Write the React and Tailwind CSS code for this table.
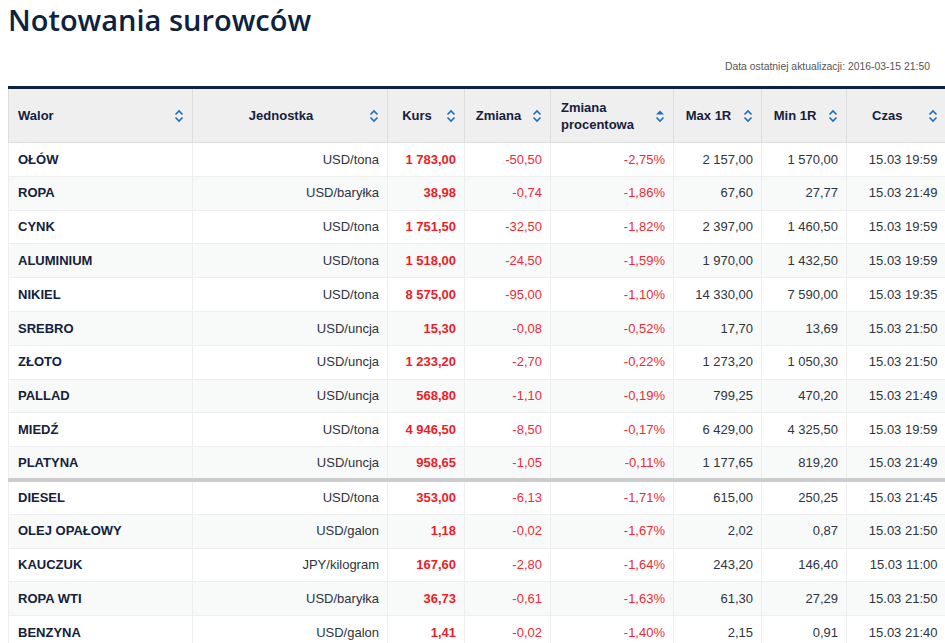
import React from "react";

const columns = [
    { key: "name", label: "Walor", width: "w-[184px]", align: "justify-between", textAlign: "text-left" },
    { key: "unit", label: "Jednostka", width: "w-[195px]", align: "justify-center", textAlign: "text-center" },
    { key: "kurs", label: "Kurs", width: "w-[77px]", align: "justify-center", textAlign: "text-center" },
    { key: "change", label: "Zmiana", width: "w-[86px]", align: "justify-center", textAlign: "text-center" },
    { key: "pct", label: "Zmiana procentowa", width: "w-[123px]", align: "justify-between", textAlign: "text-left", active: true },
    { key: "max", label: "Max 1R", width: "w-[88px]", align: "justify-center", textAlign: "text-center" },
    { key: "min", label: "Min 1R", width: "w-[85px]", align: "justify-center", textAlign: "text-center" },
    { key: "time", label: "Czas", width: "w-[99px]", align: "justify-center", textAlign: "text-center" },
];

const metals = [
    ["OŁÓW", "USD/tona", "1 783,00", "-50,50", "-2,75%", "2 157,00", "1 570,00", "15.03 19:59"],
    ["ROPA", "USD/baryłka", "38,98", "-0,74", "-1,86%", "67,60", "27,77", "15.03 21:49"],
    ["CYNK", "USD/tona", "1 751,50", "-32,50", "-1,82%", "2 397,00", "1 460,50", "15.03 19:59"],
    ["ALUMINIUM", "USD/tona", "1 518,00", "-24,50", "-1,59%", "1 970,00", "1 432,50", "15.03 19:59"],
    ["NIKIEL", "USD/tona", "8 575,00", "-95,00", "-1,10%", "14 330,00", "7 590,00", "15.03 19:35"],
    ["SREBRO", "USD/uncja", "15,30", "-0,08", "-0,52%", "17,70", "13,69", "15.03 21:50"],
    ["ZŁOTO", "USD/uncja", "1 233,20", "-2,70", "-0,22%", "1 273,20", "1 050,30", "15.03 21:50"],
    ["PALLAD", "USD/uncja", "568,80", "-1,10", "-0,19%", "799,25", "470,20", "15.03 21:49"],
    ["MIEDŹ", "USD/tona", "4 946,50", "-8,50", "-0,17%", "6 429,00", "4 325,50", "15.03 19:59"],
    ["PLATYNA", "USD/uncja", "958,65", "-1,05", "-0,11%", "1 177,65", "819,20", "15.03 21:49"],
];

const fuels = [
    ["DIESEL", "USD/tona", "353,00", "-6,13", "-1,71%", "615,00", "250,25", "15.03 21:45"],
    ["OLEJ OPAŁOWY", "USD/galon", "1,18", "-0,02", "-1,67%", "2,02", "0,87", "15.03 21:50"],
    ["KAUCZUK", "JPY/kilogram", "167,60", "-2,80", "-1,64%", "243,20", "146,40", "15.03 11:00"],
    ["ROPA WTI", "USD/baryłka", "36,73", "-0,61", "-1,63%", "61,30", "27,29", "15.03 21:50"],
    ["BENZYNA", "USD/galon", "1,41", "-0,02", "-1,40%", "2,15", "0,91", "15.03 21:40"],
];

const SortIcon = ({ active }) => (
    <svg width="10" height="14" viewBox="0 0 10 14" className="shrink-0">
        {active ? (
            <path d="M1 5.5 L5 1.5 L9 5.5 Z" fill="#1b6ec2" />
        ) : (
            <path d="M1.5 5.5 L5 2 L8.5 5.5" fill="none" stroke="#1b6ec2" strokeWidth="1.6" />
        )}
        <path d="M1.5 8.5 L5 12 L8.5 8.5" fill="none" stroke="#1b6ec2" strokeWidth="1.6" />
    </svg>
);

const Row = ({ row, striped, last }) => (
    <tr className={`h-[33.8px] ${striped ? "bg-[#f8f9f9]" : "bg-white"} ${last ? "" : "border-b border-[#eeeeee]"}`}>
        <td className="pl-[9px] pr-2 font-bold text-[#14213d] border-r border-[#eeeeee]">{row[0]}</td>
        <td className="px-2 text-right text-[#2e3440] border-r border-[#eeeeee]">{row[1]}</td>
        <td className="px-2 text-right font-bold text-[#ee1c25] border-r border-[#eeeeee]">{row[2]}</td>
        <td className="px-2 text-right text-[#ee2a36] border-r border-[#eeeeee]">{row[3]}</td>
        <td className="px-2 text-right text-[#ee2a36] border-r border-[#eeeeee]">{row[4]}</td>
        <td className="px-2 text-right text-[#2e3440] border-r border-[#eeeeee]">{row[5]}</td>
        <td className="px-2 text-right text-[#2e3440] border-r border-[#eeeeee]">{row[6]}</td>
        <td className="px-2 text-right text-[#2e3440]">{row[7]}</td>
    </tr>
);

const App = () => {
    return (
        <div className="min-h-screen bg-white px-2 overflow-hidden" style={{ fontFamily: '"Liberation Sans", Arial, sans-serif' }}>
            <h1
                className="pt-[3px] text-[29px] leading-[34px] font-semibold text-[#0d2240]"
                style={{ fontFamily: '"Open Sans", "Noto Sans", sans-serif' }}
            >
                Notowania surowców
            </h1>

            <div className="mt-[23px] pr-[7px] text-right text-[10.4px] leading-[14px] text-[#555555]">
                Data ostatniej aktualizacji: 2016-03-15 21:50
            </div>

            <table className="mt-[12px] w-[937px] table-fixed border-collapse text-[13px] border-t-[3px] border-[#0d2240]">
                <thead>
                    <tr className="h-[55px] bg-[#efefef] border-b border-[#dddddd]">
                        {columns.map((col, i) => (
                            <th
                                key={col.key}
                                className={`${col.width} font-bold text-[#14213d] ${i === 0 ? "pl-[9px] pr-[8px]" : "px-[8px]"} ${i < columns.length - 1 ? "border-r border-[#dddddd]" : ""} ${i === 0 ? "border-l border-[#dddddd]" : ""}`}
                            >
                                <div className={`flex items-center gap-2 ${col.align}`}>
                                    <span className={`${col.textAlign} ${col.key === "pct" ? "pl-[2px] leading-[17px]" : ""} ${col.align === "justify-center" ? "flex-1" : ""}`}>
                                        {col.key === "pct" ? (
                                            <>Zmiana<br />procentowa</>
                                        ) : (
                                            col.label
                                        )}
                                    </span>
                                    <SortIcon active={col.active} />
                                </div>
                            </th>
                        ))}
                    </tr>
                </thead>
                <tbody className="border-l border-[#eeeeee]">
                    {metals.map((row, i) => (
                        <Row key={row[0]} row={row} striped={i % 2 === 1} last={i === metals.length - 1} />
                    ))}
                </tbody>
                <tbody className="border-t-[4px] border-[#cccccc] border-l border-l-[#eeeeee]">
                    {fuels.map((row, i) => (
                        <Row key={row[0]} row={row} striped={i % 2 === 1} />
                    ))}
                </tbody>
            </table>
        </div>
    );
};

export default App;
